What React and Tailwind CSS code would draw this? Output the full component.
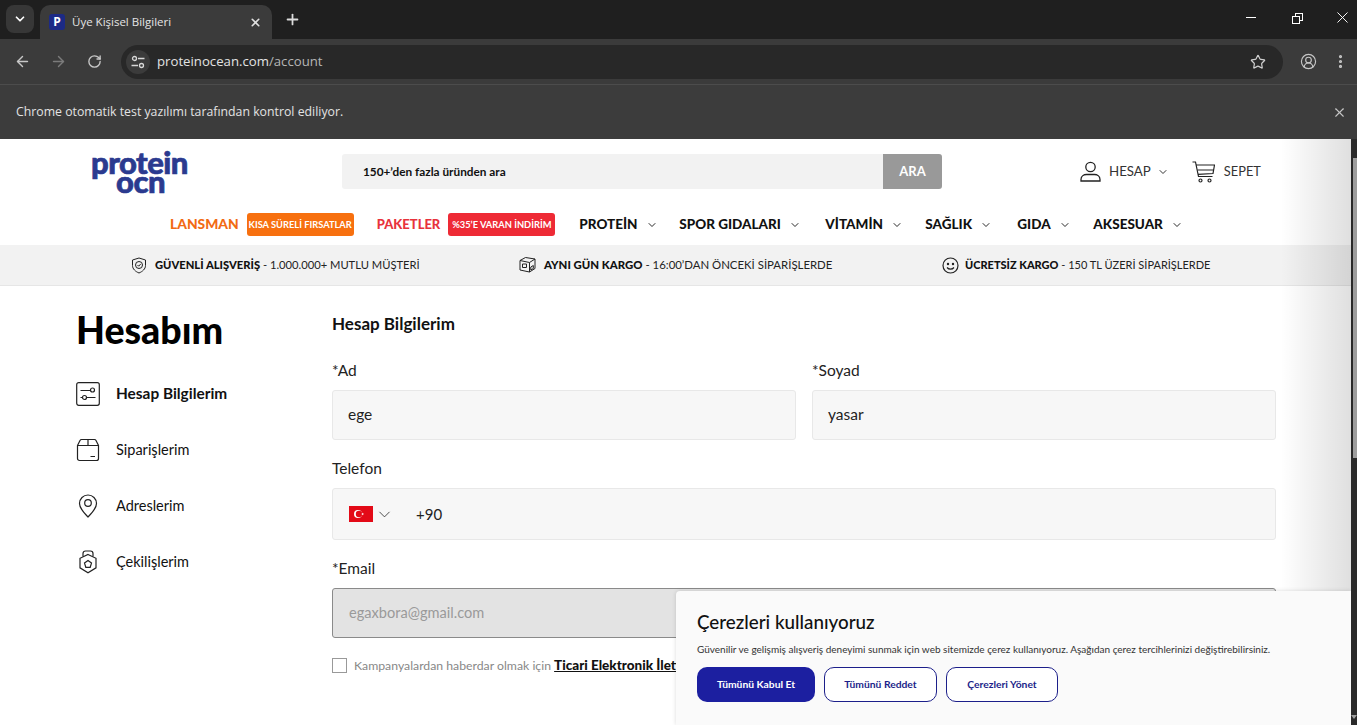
import { ChevronDown, X, Plus, ArrowLeft, ArrowRight, RotateCw, Star, CircleUserRound, EllipsisVertical } from "lucide-react";

const navItems = [
  { label: "PROTEİN", width: "w-[100px]" },
  { label: "SPOR GIDALARI", width: "w-[146px]" },
  { label: "VİTAMİN", width: "w-[100px]" },
  { label: "SAĞLIK", width: "w-[92px]" },
  { label: "GIDA", width: "w-[76px]" },
  { label: "AKSESUAR", width: "" }
];

const ShieldIcon = () => (
  <svg width="16" height="17" viewBox="0 0 16 17" fill="none" stroke="#222" strokeWidth="1">
    <path d="M8 1l6.500 2v5.500c0 3.500-3 6-6.500 7.500-3.500-1.500-6.500-4-6.500-7.500V3z" />
    <circle cx="8" cy="8" r="3.500" />
    <path d="M6.500 8l1.200 1.200 2-2.200" />
  </svg>
);

const BoxIcon = () => (
  <svg width="17" height="17" viewBox="0 0 17 17" fill="none" stroke="#222" strokeWidth="1">
    <path d="M1 4.500L6.500 1.500l9.500 1.500v9.500l-5.500 3.500-9.500-2z" />
    <path d="M1 4.500l9.500 2 5.500-3.500M10.500 6.500V16M3.500 8h4v3.500h-4zM11.800 11l2.500-1.500v3l-2.500 1.500z" />
  </svg>
);

const SmileIcon = () => (
  <svg width="17" height="17" viewBox="0 0 17 17" fill="none" stroke="#222" strokeWidth="1.200">
    <circle cx="8.500" cy="8.500" r="7.500" />
    <circle cx="6" cy="7" r="0.600" fill="#222" />
    <circle cx="11" cy="7" r="0.600" fill="#222" />
    <path d="M5 10.500c1.800 2.200 5.200 2.200 7 0" />
  </svg>
);

const UserIcon = () => (
  <svg width="21" height="21" viewBox="0 0 21 21" fill="none" stroke="#222" strokeWidth="1.300">
    <circle cx="10.500" cy="6" r="4.700" />
    <path d="M1 20v-1.500C1 15 4 13.500 6.500 13.500h8c2.500 0 5.500 1.500 5.500 5V20z" />
  </svg>
);

const CartIcon = () => (
  <svg width="23" height="22" viewBox="0 0 23 22" fill="none" stroke="#222" strokeWidth="1.200">
    <path d="M0.500 1h3l3 14.500h14" />
    <path d="M4 4h18.500l-1.500 8.500-15 0.800M5.500 9h16" />
    <circle cx="8.500" cy="19.500" r="1.500" />
    <circle cx="17.500" cy="19.500" r="1.500" />
  </svg>
);

const SlidersBox = () => (
  <svg width="24" height="24" viewBox="0 0 24 24" fill="none" stroke="#222" strokeWidth="1.200">
    <rect x="0.700" y="0.700" width="22.600" height="22.600" rx="2" />
    <path d="M4.500 8.500h10M4.500 15.500h2.500M10 15.500h9.500" />
    <circle cx="16.500" cy="8" r="2" />
    <circle cx="8.500" cy="15.500" r="2" />
  </svg>
);

const OrdersIcon = () => (
  <svg width="24" height="24" viewBox="0 0 24 24" fill="none" stroke="#222" strokeWidth="1.200">
    <path d="M1.500 7.500L4 2.500c0.300-0.600 0.800-1 1.500-1h13c0.700 0 1.200 0.400 1.500 1l2.500 5v13c0 1.200-0.800 2-2 2h-17c-1.200 0-2-0.800-2-2z" />
    <path d="M1.500 7.500h21M12 1.500v6M14.500 18.500h4.500" />
  </svg>
);

const PinIcon = () => (
  <svg width="20" height="24" viewBox="0 0 20 24" fill="none" stroke="#222" strokeWidth="1.200">
    <path d="M10 23C6 19 1.500 14.500 1.500 9.500a8.500 8.500 0 0117 0C18.500 14.500 14 19 10 23z" />
    <circle cx="10" cy="9" r="3.300" />
  </svg>
);

const DrawIcon = () => (
  <svg width="20" height="24" viewBox="0 0 20 24" fill="none" stroke="#222" strokeWidth="1.200">
    <path d="M10 4.500l8 3.800v9.500l-8 5-8-5V8.300z" />
    <path d="M5 6.500V3.500C5 2 6 1 7.500 1h5C14 1 15 2 15 3.500v3" />
    <path d="M10 10.500l3.500 2.600-1.300 4.200H7.800l-1.300-4.200z" />
  </svg>
);

const SiteInfoIcon = () => (
  <svg width="14" height="14" viewBox="0 0 14 14" fill="none" stroke="#d8d8d8" strokeWidth="1.300">
    <circle cx="3.500" cy="3.500" r="2" />
    <circle cx="10.500" cy="10.500" r="2" />
    <path d="M7 3.500h6.500M0.500 10.500H7" />
  </svg>
);

const TurkeyFlag = () => (
  <svg width="24" height="16" viewBox="0 0 24 16">
    <rect width="24" height="16" fill="#e30a17" />
    <circle cx="9" cy="8" r="4" fill="#fff" />
    <circle cx="10" cy="8" r="3.200" fill="#e30a17" />
    <path d="M12 8l2.800-1-1.700 2.400V6.600L14.800 9z" fill="#fff" />
  </svg>
);

const Field = ({ label, value }) => (
  <label className="block">
    <span className="block h-[20px] text-[15.500px] leading-[20px] text-[#222]">{label}</span>
    <div className="mt-[10px] flex h-[50px] items-center rounded-[3px] border border-[#e8e8e8] bg-[#f7f7f7] px-[15px] text-[15.500px] text-[#222]">
      {value}
    </div>
  </label>
);

const SideItem = ({ icon, label, active }) => (
  <div className="flex h-[56px] items-center">
    <div className="flex w-[24px] justify-center">{icon}</div>
    <span className={`ml-[16px] text-[14.500px] text-[#111] ${active ? "text-[15.400px] font-bold" : ""}`}>{label}</span>
  </div>
);

const BrowserChrome = () => (
  <div className="shrink-0 font-['Open_Sans',sans-serif]">
    <div className="flex h-[39px] items-end bg-[#1f1f1f] pl-[6px] text-white">
      <div className="mb-[6px] flex h-[28px] w-[28px] items-center justify-center rounded-[8px] bg-[#373737]">
        <ChevronDown size={14} strokeWidth={3} />
      </div>
      <div className="ml-[6px] flex h-[34px] w-[232px] items-center rounded-t-[10px] bg-[#3b3b3b] pl-[9px] pr-[10px]">
        <div className="flex h-[16px] w-[16px] items-center justify-center rounded-[3px] bg-[#1c2a86] text-[12px] font-bold leading-none">P</div>
        <span className="ml-[7px] flex-1 text-[11.500px] text-[#e4e4e4]">Üye Kişisel Bilgileri</span>
        <X size={13} strokeWidth={3} className="text-[#e0e0e0]" />
      </div>
      <Plus size={17} strokeWidth={2.500} className="mb-[11px] ml-[12px] text-[#dcdcdc]" />
      <div className="mb-[12px] ml-auto flex items-center pr-[5px]">
        <div className="h-[1px] w-[10px] bg-white" />
        <div className="relative ml-[33px] h-[16px] w-[16px]">
          <div className="absolute left-[6px] top-[3px] h-[8px] w-[8px] border border-white" />
          <div className="absolute left-[3px] top-[6px] h-[8px] w-[8px] border border-white bg-[#1f1f1f]" />
        </div>
        <X size={19} strokeWidth={1.200} className="ml-[28px]" />
      </div>
    </div>
    <div className="flex h-[46px] items-center border-b border-[#4c4c4c] bg-[#3b3b3b] pl-[14px] pr-[6px] text-[#c7c7c7]">
      <ArrowLeft size={17} strokeWidth={2} />
      <ArrowRight size={17} strokeWidth={2} className="ml-[19px] text-[#7b7b7b]" />
      <RotateCw size={15} strokeWidth={2.200} className="ml-[20px]" />
      <div className="ml-[19px] flex h-[34px] w-[1162px] items-center rounded-full bg-[#282828] pl-[5px] pr-[17px]">
        <div className="flex h-[24px] w-[24px] items-center justify-center rounded-full bg-[#3b3b3b]">
          <SiteInfoIcon />
        </div>
        <span className="ml-[7px] flex-1 text-[13.200px] text-[#e3e3e3]">
          proteinocean.com<span className="text-[#b5b5b5]">/account</span>
        </span>
        <Star size={16} strokeWidth={1.800} className="text-[#d0d0d0]" />
      </div>
      <CircleUserRound size={17} strokeWidth={1.600} className="ml-[17px]" />
      <EllipsisVertical size={17} strokeWidth={2.500} className="ml-[15px]" />
    </div>
    <div className="flex h-[54px] items-center justify-between bg-[#3c3c3c] pl-[16px] pr-[10px]">
      <span className="text-[12.300px] text-[#e3e3e3]">Chrome otomatik test yazılımı tarafından kontrol ediliyor.</span>
      <X size={15} strokeWidth={1.800} className="text-[#c7c7c7]" />
    </div>
  </div>
);

const Header = () => (
  <header>
    <div className="flex h-[65px] items-center pl-[91px]">
      <div className="flex w-[251px] flex-col items-start font-['Lato',sans-serif] text-[31px] font-black leading-[19px] tracking-[-0.5px] text-[#2b3a8f] [-webkit-text-stroke:0.7px_#2b3a8f]">
        <span>protein</span>
        <span className="ml-[25px]">ocn</span>
      </div>
      <div className="flex h-[35px] w-[600px] items-center rounded-[3px] bg-[#f2f2f2] pl-[21px]">
        <span className="flex-1 text-[11.800px] font-bold text-[#111]">150+’den fazla üründen ara</span>
        <button className="h-full w-[59px] rounded-r-[3px] bg-[#999] text-[13px] font-bold text-white">ARA</button>
      </div>
      <div className="ml-[138px] flex items-center text-[13.300px] text-[#333]">
        <UserIcon />
        <span className="ml-[8px]">HESAP</span>
        <ChevronDown size={12} strokeWidth={2} className="ml-[6px]" />
        <div className="ml-[23px]"><CartIcon /></div>
        <span className="ml-[9px] text-[12.800px]">SEPET</span>
      </div>
    </div>
    <nav className="flex h-[41px] items-center pl-[170px] text-[13.500px] font-black text-[#111]">
      <span className="text-[13.800px] text-[#f26a13]">LANSMAN</span>
      <span className="ml-[8px] flex h-[23px] w-[107px] items-center justify-center rounded-[3px] bg-[#f7700f] text-[9.300px] font-bold text-white">KISA SÜRELİ FIRSATLAR</span>
      <span className="ml-[23px] text-[13px] text-[#e8323c]">PAKETLER</span>
      <span className="ml-[8px] mr-[24px] flex h-[23px] w-[107px] items-center justify-center rounded-[3px] bg-[#ee2a35] text-[9.300px] font-bold text-white">%35’E VARAN İNDİRİM</span>
      {navItems.map((item) => (
        <span key={item.label} className={`flex items-center ${item.width}`}>
          {item.label}
          <ChevronDown size={12} strokeWidth={1.800} className="ml-[8px]" />
        </span>
      ))}
    </nav>
    <div className="flex h-[41px] items-center border-b border-[#e6e6e6] bg-[#f2f2f2] text-[#222]">
      <div className="ml-[131px] flex w-[388px] items-center text-[11.200px]">
        <ShieldIcon />
        <span className="ml-[8px]"><b className="font-black text-[#111]">GÜVENLİ ALIŞVERİŞ</b> - 1.000.000+ MUTLU MÜŞTERİ</span>
      </div>
      <div className="flex w-[423px] items-center text-[11.400px]">
        <BoxIcon />
        <span className="ml-[8px]"><b className="font-black text-[#111]">AYNI GÜN KARGO</b> - 16:00’DAN ÖNCEKİ SİPARİŞLERDE</span>
      </div>
      <div className="flex items-center text-[11px]">
        <SmileIcon />
        <span className="ml-[6px]"><b className="font-black text-[#111]">ÜCRETSİZ KARGO</b> - 150 TL ÜZERİ SİPARİŞLERDE</span>
      </div>
    </div>
  </header>
);

const CookieBanner = () => (
  <div className="absolute bottom-0 right-0 h-[134px] w-[675px] rounded-tl-[4px] bg-[#fafafa] pl-[21px] pt-[20px] shadow-[0_0_4px_rgba(0,0,0,0.15)]">
    <h2 className="text-[18.800px] font-medium leading-[22px] text-[#111]">Çerezleri kullanıyoruz</h2>
    <p className="mt-[9px] text-[10px] leading-[14px] text-[#333]">
      Güvenilir ve gelişmiş alışveriş deneyimi sunmak için web sitemizde çerez kullanıyoruz. Aşağıdan çerez tercihlerinizi değiştirebilirsiniz.
    </p>
    <div className="mt-[11px] flex gap-[9px] text-[10.300px] font-bold">
      <button className="h-[35px] w-[118px] rounded-[10px] bg-[#1c1fa0] text-white">Tümünü Kabul Et</button>
      <button className="h-[35px] w-[113px] rounded-[10px] border border-[#1c1f8a] bg-white text-[#1c1f8a]">Tümünü Reddet</button>
      <button className="h-[35px] w-[112px] rounded-[10px] border border-[#1c1f8a] bg-white text-[#1c1f8a]">Çerezleri Yönet</button>
    </div>
  </div>
);

export default function App() {
  return (
    <div className="flex h-[725px] w-[1357px] flex-col overflow-hidden bg-white font-['Lato',sans-serif]">
      <BrowserChrome />
      <div className="flex min-h-0 flex-1">
        <div className="relative min-w-0 flex-1 overflow-hidden">
          <Header />
          <main className="flex pl-[76px] pt-[22px]">
            <aside className="w-[256px] shrink-0">
              <h1 className="text-[37.500px] font-black leading-[44px] text-black">Hesabım</h1>
              <div className="mt-[14px]">
                <SideItem icon={<SlidersBox />} label="Hesap Bilgilerim" active />
                <SideItem icon={<OrdersIcon />} label="Siparişlerim" />
                <SideItem icon={<PinIcon />} label="Adreslerim" />
                <SideItem icon={<DrawIcon />} label="Çekilişlerim" />
              </div>
            </aside>
            <section className="w-[944px] shrink-0 pt-[6px]">
              <h2 className="text-[17px] font-bold leading-[20px] text-[#111]">Hesap Bilgilerim</h2>
              <div className="mt-[26px] grid grid-cols-2 gap-x-[16px]">
                <Field label="*Ad" value="ege" />
                <Field label="*Soyad" value="yasar" />
              </div>
              <div className="mt-[18px]">
                <span className="block h-[20px] text-[15.500px] leading-[20px] text-[#222]">Telefon</span>
                <div className="mt-[10px] flex h-[52px] items-center rounded-[3px] border border-[#e8e8e8] bg-[#f7f7f7] pl-[16px] text-[15px] text-[#222]">
                  <TurkeyFlag />
                  <ChevronDown size={19} strokeWidth={1} className="ml-[2px] text-[#222]" />
                  <span className="ml-[22px]">+90</span>
                </div>
              </div>
              <div className="mt-[18px]">
                <span className="block h-[20px] text-[15.500px] leading-[20px] text-[#222]">*Email</span>
                <div className="mt-[10px] flex h-[50px] items-center rounded-[3px] border border-[#8a8a8a] bg-[#e3e3e3] px-[16px] text-[14.600px] text-[#9a9a9a]">
                  egaxbora@gmail.com
                </div>
              </div>
              <div className="mt-[17px] flex items-center text-[12.250px] text-[#888]">
                <div className="h-[15px] w-[15px] border border-[#999] bg-white" />
                <span className="ml-[7px]">
                  Kampanyalardan haberdar olmak için <b className="text-[13.500px] font-black text-[#111] underline">Ticari Elektronik İleti</b>
                </span>
              </div>
            </section>
          </main>
          <div className="pointer-events-none absolute inset-y-0 right-0 w-[70px] bg-gradient-to-r from-transparent to-[#00000020]" />
          <CookieBanner />
        </div>
        <div className="relative w-[6px] shrink-0 bg-[#2a2a2a]">
          <div className="ml-[2px] mt-[19px] h-[300px] w-[4px] bg-[#9e9e9e]" />
          <div className="absolute bottom-[6px] right-0 h-0 w-0 border-x-[3px] border-t-[4px] border-x-transparent border-t-[#9e9e9e]" />
        </div>
      </div>
    </div>
  );
}
